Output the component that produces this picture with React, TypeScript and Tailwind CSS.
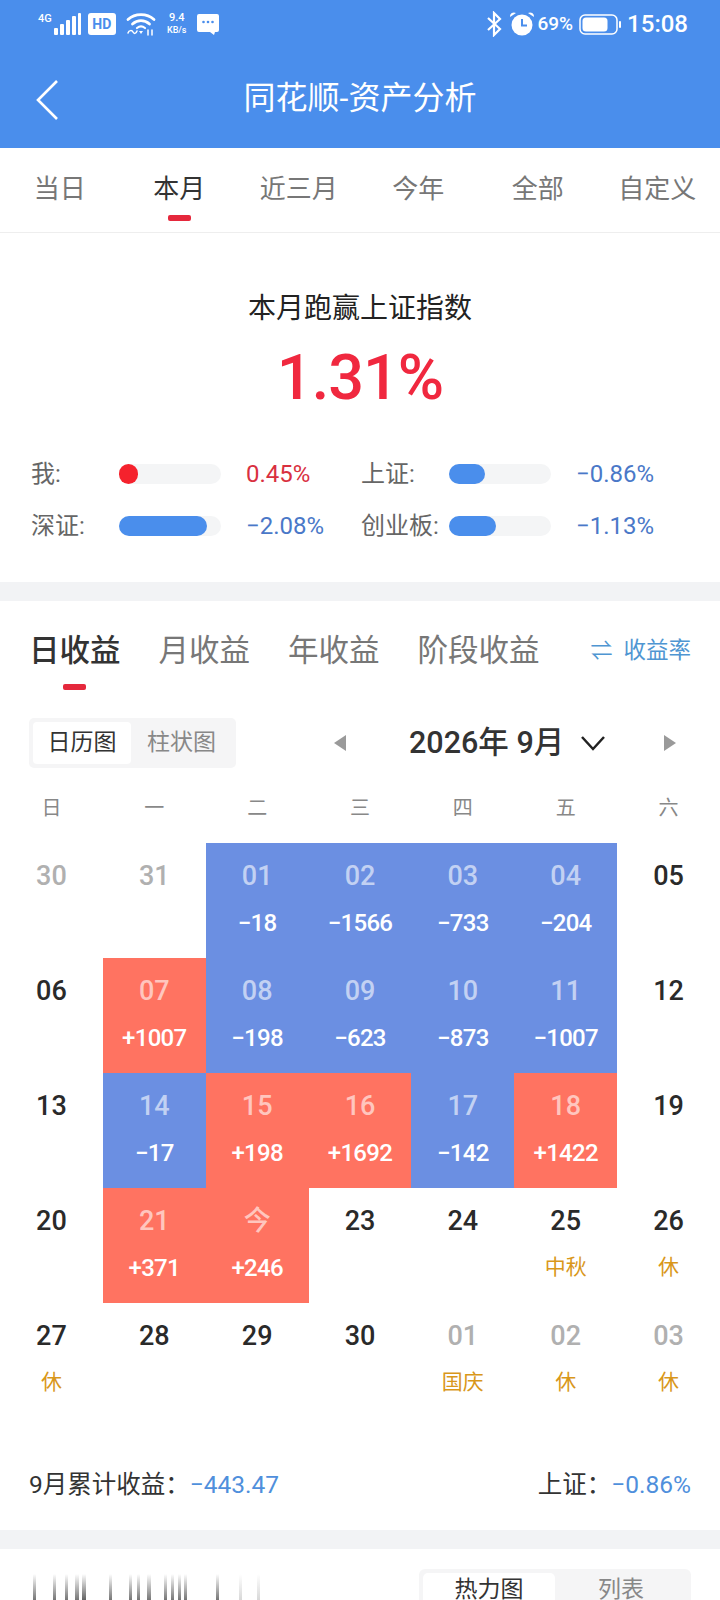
import React from 'react';

const FONT = "font-['Roboto','Noto_Sans_CJK_SC',sans-serif]";

type Day = { d: string; v?: string; tag?: string; muted?: boolean; kind?: 'up' | 'down' };

const weeks: Day[][] = [
    [
        { d: '30', muted: true },
        { d: '31', muted: true },
        { d: '01', v: '−18', kind: 'down' },
        { d: '02', v: '−1566', kind: 'down' },
        { d: '03', v: '−733', kind: 'down' },
        { d: '04', v: '−204', kind: 'down' },
        { d: '05' },
    ],
    [
        { d: '06' },
        { d: '07', v: '+1007', kind: 'up' },
        { d: '08', v: '−198', kind: 'down' },
        { d: '09', v: '−623', kind: 'down' },
        { d: '10', v: '−873', kind: 'down' },
        { d: '11', v: '−1007', kind: 'down' },
        { d: '12' },
    ],
    [
        { d: '13' },
        { d: '14', v: '−17', kind: 'down' },
        { d: '15', v: '+198', kind: 'up' },
        { d: '16', v: '+1692', kind: 'up' },
        { d: '17', v: '−142', kind: 'down' },
        { d: '18', v: '+1422', kind: 'up' },
        { d: '19' },
    ],
    [
        { d: '20' },
        { d: '21', v: '+371', kind: 'up' },
        { d: '今', v: '+246', kind: 'up' },
        { d: '23' },
        { d: '24' },
        { d: '25', tag: '中秋' },
        { d: '26', tag: '休' },
    ],
    [
        { d: '27', tag: '休' },
        { d: '28' },
        { d: '29' },
        { d: '30' },
        { d: '01', tag: '国庆', muted: true },
        { d: '02', tag: '休', muted: true },
        { d: '03', tag: '休', muted: true },
    ],
];

// redacted title above the heat map: blurred vertical strokes, x and opacity
const blurStrokes: [number, number, number][] = [
    [4, 3, 0.7], [24, 3, 0.7], [36, 3, 0.7], [46, 4, 0.7], [53, 4, 0.8], [80, 3, 0.7],
    [100, 3, 0.7], [108, 3, 0.7], [118, 4, 0.7], [135, 3, 0.7], [142, 3, 0.7], [149, 3, 0.7],
    [155, 3, 0.7], [187, 3, 0.7], [210, 3, 0.2], [228, 3, 0.2],
];

const StatusBar = () => (
    <div className="flex h-[48px] items-center justify-between pl-[38px] pr-[32px] text-white">
        <div className="flex items-center">
            <span className="mb-[12px] text-[11px] font-medium leading-none">4G</span>
            <svg width="29" height="24" viewBox="0 0 29 24" className="ml-[1px]" fill="white">
                <rect x="1" y="16" width="4" height="7" rx="1" />
                <rect x="7" y="12" width="4" height="11" rx="1" />
                <rect x="13" y="8" width="4" height="15" rx="1" />
                <rect x="19" y="4" width="4" height="19" rx="1" />
                <rect x="25" y="1" width="3" height="22" rx="1" />
            </svg>
            <span className="ml-[6px] flex h-[22px] w-[28px] items-center justify-center rounded-[3px] bg-white text-[14px] font-bold leading-none text-[#4a8eec]">
                HD
            </span>
            <svg width="30" height="24" viewBox="0 0 30 24" className="ml-[10px]" fill="none" stroke="white" strokeWidth="2.800" strokeLinecap="round">
                <path d="M2 7.500c7-6.500 19-6.500 26 0" />
                <path d="M6.500 12c5-4.500 12-4.500 17 0" />
                <path d="M11 16c2.500-2 5.500-2 8 0" strokeWidth="2.200" />
                <path d="M2 21c1-3 4-3 5-1s3 2 4-1" strokeWidth="1.500" />
                <path d="M13 19h4l-2 3z" fill="white" stroke="none" />
                <path d="M22 18v5M26 18v5" strokeWidth="1.500" />
            </svg>
            <div className="ml-[11px] flex w-[20px] flex-col items-center text-[9px] font-medium leading-[12px]">
                <span className="text-[11px]">9.4</span>
                <span className="whitespace-nowrap">KB/s</span>
            </div>
            <svg width="24" height="24" viewBox="0 0 24 24" className="ml-[9px]">
                <path d="M3 2h18a2 2 0 0 1 2 2v14a2 2 0 0 1-2 2h-2l-1 3-4-3H3a2 2 0 0 1-2-2V4a2 2 0 0 1 2-2z" fill="white" />
                <circle cx="7.500" cy="10" r="1.300" fill="#4a8eec" />
                <circle cx="12" cy="10" r="1.300" fill="#4a8eec" />
                <circle cx="16.500" cy="10" r="1.300" fill="#4a8eec" />
            </svg>
        </div>
        <div className="flex items-center">
            <svg width="16" height="26" viewBox="0 0 16 26" fill="none" stroke="white" strokeWidth="2.200">
                <path d="M2 7l12 11-6 6V2l6 6L2 19" />
            </svg>
            <svg width="28" height="28" viewBox="0 0 28 28" className="ml-[6px]">
                <circle cx="14" cy="15" r="10.500" fill="white" />
                <path d="M14 9v6.500h5" fill="none" stroke="#4a8eec" strokeWidth="2" />
                <path d="M2 7a4 4 0 0 1 6-4zM26 7a4 4 0 0 0-6-4z" fill="white" />
            </svg>
            <span className="ml-[2px] text-[19px] font-medium">69%</span>
            <svg width="43" height="21" viewBox="0 0 43 21" className="ml-[6px]">
                <rect x="1" y="1" width="37" height="19" rx="5" fill="none" stroke="white" strokeWidth="1.500" />
                <rect x="3.500" y="3.500" width="25" height="14" rx="3.500" fill="white" />
                <rect x="40" y="7" width="2" height="7" rx="1" fill="white" />
            </svg>
            <span className="ml-[5px] text-[24px] font-medium leading-none">15:08</span>
        </div>
    </div>
);

const Tabs = () => {
    const tabs = ['当日', '本月', '近三月', '今年', '全部', '自定义'];
    return (
        <div className="grid h-[85px] grid-cols-6 items-start border-b border-[#eeeeee] pr-[3px] pt-[24px]">
            {tabs.map((label, i) => (
                <div key={label} className="flex flex-col items-center">
                    <span className={`text-[26px] leading-[34px] ${i === 1 ? 'text-[#333333]' : 'text-[#777777]'}`}>{label}</span>
                    {i === 1 && <span className="mt-[9px] h-[6px] w-[23px] rounded-[2px] bg-[#e5283c]" />}
                </div>
            ))}
        </div>
    );
};

const Bar = ({ label, pct, fill, value, color }: { label: string; pct: number; fill: string; value: string; color: string }) => (
    <div className="flex items-center">
        <span className="w-[88px] text-[24px] leading-[28px] text-[#666666]">{label}</span>
        <div className="h-[20px] w-[102px] rounded-full bg-[#f4f5f6]">
            <div className={`h-full rounded-full ${fill}`} style={{ width: `${pct}%` }} />
        </div>
        <span className={`ml-[25px] text-[24px] leading-[28px] ${color}`}>{value}</span>
    </div>
);

const Summary = () => (
    <div className="flex h-[349px] flex-col items-center">
        <div className="mt-[56px] text-[28px] leading-[40px] text-[#222222]">本月跑赢上证指数</div>
        <div className="mt-[11px] text-[63px] font-medium leading-[76px] tracking-[-1px] text-[#f0283f]">1.31%</div>
        <div className="mt-[44px] grid w-full grid-cols-[330px_1fr] gap-y-[24px] pl-[31px]">
            <Bar label="我:" pct={19} fill="bg-[#f5222d]" value="0.45%" color="text-[#d9303f]" />
            <Bar label="上证:" pct={35} fill="bg-[#4a8eec]" value="−0.86%" color="text-[#4a78c8]" />
            <Bar label="深证:" pct={86} fill="bg-[#4a8eec]" value="−2.08%" color="text-[#4a78c8]" />
            <Bar label="创业板:" pct={46} fill="bg-[#4a8eec]" value="−1.13%" color="text-[#4a78c8]" />
        </div>
    </div>
);

const ProfitTabs = () => (
    <div className="flex h-[117px] items-start pl-[29px] pr-[29px] pt-[30px]">
        <div className="flex flex-col items-center">
            <span className="text-[30.500px] font-medium leading-[40px] text-[#333333]">日收益</span>
            <span className="mt-[13px] h-[6px] w-[23px] rounded-[2px] bg-[#e5283c]" />
        </div>
        <span className="ml-[38px] text-[30.500px] leading-[40px] text-[#777777]">月收益</span>
        <span className="ml-[38px] text-[30.500px] leading-[40px] text-[#777777]">年收益</span>
        <span className="ml-[38px] text-[30.500px] leading-[40px] text-[#777777]">阶段收益</span>
        <span className="ml-auto flex h-[40px] items-center text-[22.500px] text-[#4f96d2]">
            <span className="mr-[11px] text-[22px] leading-none">⇌</span>收益率
        </span>
    </div>
);

const MonthBar = () => (
    <div className="flex h-[50px] items-center pl-[29px]">
        <div className="flex h-[50px] w-[207px] rounded-[5px] bg-[#f5f5f6] p-[4px]">
            <span className="flex h-[42px] w-[98px] items-center justify-center rounded-[4px] bg-white text-[23px] text-[#333333]">日历图</span>
            <span className="flex h-[42px] flex-1 items-center justify-center text-[23px] text-[#888888]">柱状图</span>
        </div>
        <svg width="14" height="18" viewBox="0 0 14 18" className="ml-[97px]"><path d="M13 1v16L1 9z" fill="#9a9a9a" /></svg>
        <span className="ml-[62px] whitespace-nowrap text-[30.500px] font-medium leading-none text-[#333333]">2026年 9月</span>
        <svg width="26" height="16" viewBox="0 0 26 16" className="ml-[16px]" fill="none" stroke="#222222" strokeWidth="2.500">
            <path d="M2 2l11 12L24 2" />
        </svg>
        <svg width="14" height="18" viewBox="0 0 14 18" className="ml-[57px]"><path d="M1 1v16L13 9z" fill="#9a9a9a" /></svg>
    </div>
);

const Cell = ({ day }: { day: Day }) => {
    const bg = day.kind === 'up' ? 'bg-[#ff7361]' : day.kind === 'down' ? 'bg-[#6b8fe2]' : '';
    const num = day.kind ? 'text-white/60' : day.muted ? 'text-[#b0b0b0]' : 'text-[#2a2a2a]';
    return (
        <div className={`flex h-[115px] flex-col items-center pt-[16px] ${bg}`}>
            <span className={`text-[27px] font-medium leading-[34px] ${num}`}>{day.d}</span>
            {day.v && <span className="mt-[14px] text-[24px] font-medium leading-[32px] tracking-[-0.7px] text-white">{day.v}</span>}
            {day.tag && <span className="mt-[13px] text-[21px] leading-[32px] text-[#d9971a]">{day.tag}</span>}
        </div>
    );
};

const Calendar = () => (
    <div className="mt-[14px]">
        <div className="grid h-[61px] grid-cols-7 items-center pb-[10px] text-center text-[20px] text-[#888888]">
            {['日', '一', '二', '三', '四', '五', '六'].map((w) => (
                <span key={w}>{w}</span>
            ))}
        </div>
        <div className="grid grid-cols-7">
            {weeks.flat().map((day, i) => (
                <Cell key={i} day={day} />
            ))}
        </div>
    </div>
);

export default function App() {
    return (
        <div className={`h-[1600px] w-[720px] overflow-hidden bg-white ${FONT}`}>
            <div className="h-[148px] bg-[#4a8eec]">
                <StatusBar />
                <div className="relative flex h-[100px] items-center justify-center">
                    <svg width="24" height="42" viewBox="0 0 24 42" className="absolute left-[35px] top-[31px]" fill="none" stroke="white" strokeWidth="2.600">
                        <path d="M22 2L3 21l19 19" />
                    </svg>
                    <span className="text-[32px] leading-none text-white">同花顺-资产分析</span>
                </div>
            </div>
            <Tabs />
            <Summary />
            <div className="h-[19px] bg-[#f2f3f5]" />
            <ProfitTabs />
            <MonthBar />
            <Calendar />
            <div className="mt-[43px] flex h-[48px] items-center justify-between px-[29px] text-[24.500px] text-[#333333]">
                <span>9月累计收益{'\uFF1A'}<span className="text-[#4f8fdc]">−443.47</span></span>
                <span>上证{'\uFF1A'}<span className="text-[#4f8fdc]">−0.86%</span></span>
            </div>
            <div className="mt-[21px] h-[19px] bg-[#f2f3f5]" />
            <div className="flex items-start justify-between pl-[29px] pr-[29px] pt-[20px]">
                <svg width="240" height="27" viewBox="0 0 240 27" className="mt-[5px]">
                    <defs>
                        <linearGradient id="fade" x1="0" y1="0" x2="0" y2="1">
                            <stop offset="0" stopColor="#333333" stopOpacity="0" />
                            <stop offset="1" stopColor="#333333" stopOpacity="1" />
                        </linearGradient>
                    </defs>
                    {blurStrokes.map(([x, w, o]) => (
                        <rect key={x} x={x} y="0" width={w} height="27" fill="url(#fade)" opacity={o} />
                    ))}
                </svg>
                <div className="flex h-[60px] w-[272px] rounded-[6px] bg-[#f5f5f6] p-[4px]">
                    <span className="flex h-[60px] w-[132px] justify-center rounded-[5px] bg-white pt-[1px] text-[23px] leading-[32px] text-[#333333]">热力图</span>
                    <span className="flex flex-1 justify-center pt-[1px] text-[23px] leading-[32px] text-[#888888]">列表</span>
                </div>
            </div>
        </div>
    );
}
